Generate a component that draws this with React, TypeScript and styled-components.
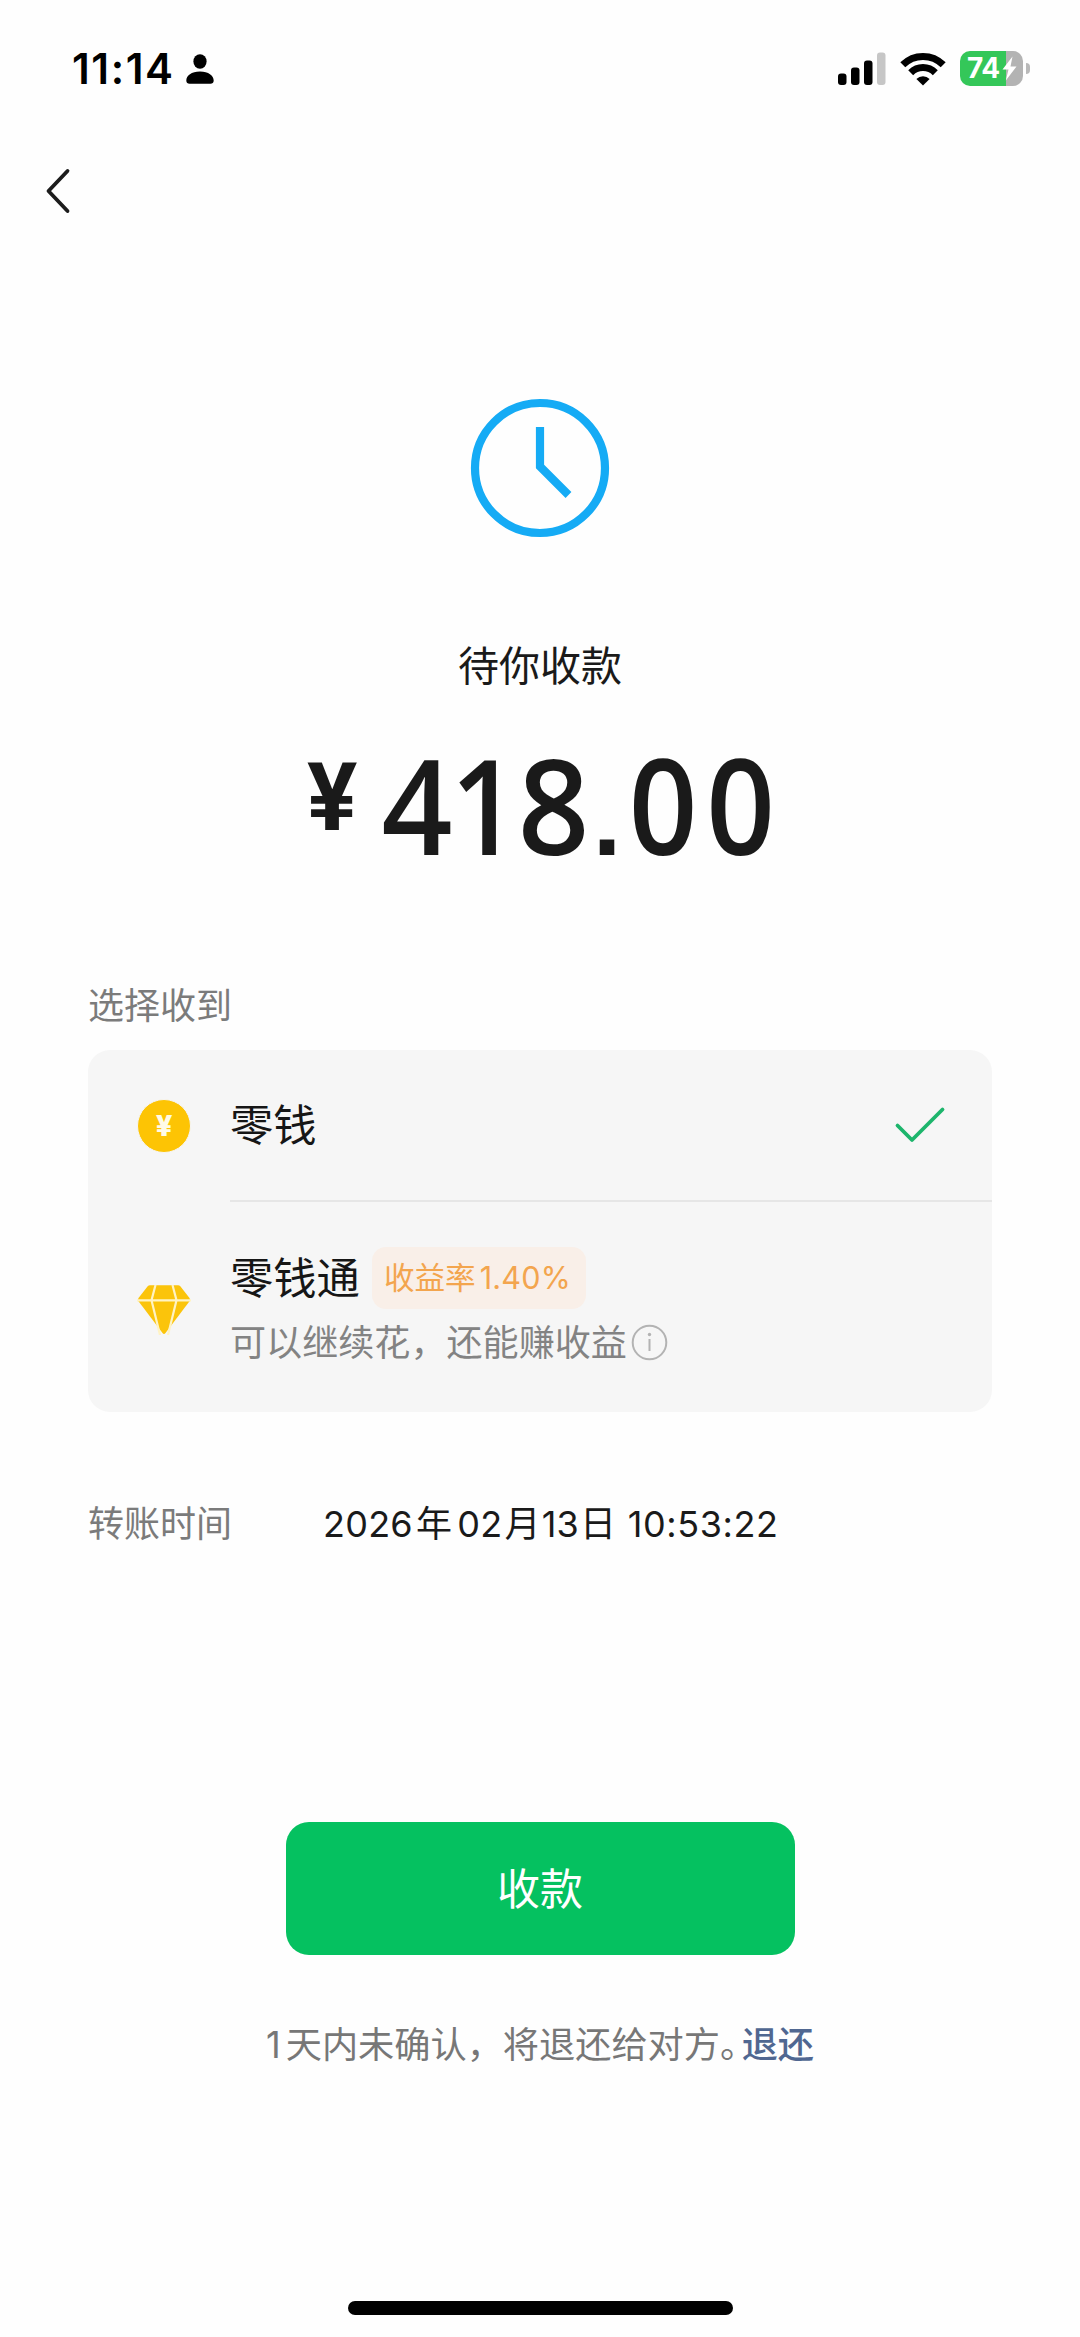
import React from "react";
import styled, { createGlobalStyle } from "styled-components";

const Global = createGlobalStyle`
  * { box-sizing: border-box; }
  html, body { margin: 0; padding: 0; background: #fefefe; }
  body { font-family: Inter, "Noto Sans CJK SC", sans-serif; color: #1a1a1a; }
`;

const Screen = styled.div`
  width: 1080px;
  height: 2337px;
  display: flex;
  flex-direction: column;
  background: #fefefe;
  overflow: hidden;
`;

const StatusBar = styled.header`
  height: 137px;
  flex: none;
  padding: 0 50px 0 72px;
  display: flex;
  justify-content: space-between;
  align-items: center;
`;

const StatusGroup = styled.div<{ $gap: number }>`
  display: flex;
  align-items: center;
  gap: ${(p) => p.$gap}px;
`;

const Clock = styled.span`
  font-size: 42px;
  line-height: 48px;
  font-weight: 600;
  letter-spacing: 1.6px;
  color: #000;
  width: 101px;
  white-space: nowrap;
`;

const Battery = styled.div`
  display: flex;
  align-items: center;
  gap: 3px;
`;

const BatteryBody = styled.div`
  width: 63px;
  height: 35px;
  border-radius: 10px;
  background: linear-gradient(90deg, #34c759 0 46px, #b3b3b3 46px);
  color: #fff;
  font-size: 28px;
  line-height: 35px;
  font-weight: 700;
  letter-spacing: -0.5px;
  padding-left: 7px;
  display: flex;
  align-items: center;
  gap: 2px;
`;

const BatteryCap = styled.div`
  width: 4px;
  height: 11px;
  border-radius: 0 4px 4px 0;
  background: #b9b9b9;
`;

const NavBar = styled.nav`
  height: 108px;
  flex: none;
  padding: 29px 0 0 44px;
`;

const Hero = styled.section`
  height: 717px;
  flex: none;
  padding-top: 153px;
  display: flex;
  flex-direction: column;
  align-items: center;
`;

const Title = styled.h1`
  margin: 98px 0 0;
  font-size: 41px;
  line-height: 60px;
  font-weight: 400;
`;

const Amount = styled.div`
  margin-top: 43px;
  width: 466px;
  height: 140px;
  display: flex;
  align-items: flex-start;
`;

const Currency = styled.span`
  flex: none;
  margin-top: 4px;
  font-family: Roboto, sans-serif;
  font-size: 94px;
  line-height: 110px;
  width: 72px;
  font-weight: 700;
`;

const Figure = styled.div`
  flex: none;
  display: flex;
  align-items: baseline;
  font-family: "Open Sans", sans-serif;
  font-size: 132px;
  line-height: 130px;
  font-weight: 600;
`;

const Digit = styled.span<{ $width: number; $squeeze?: number }>`
  flex: none;
  width: ${(p) => p.$width}px;
  display: flex;
  justify-content: center;
  transform: scaleX(${(p) => p.$squeeze ?? 1});
`;

const Point = styled(Digit)`
  font-family: "Liberation Sans", sans-serif;
  font-size: 103px;
  font-weight: 700;
  line-height: 1;
`;

const Content = styled.main`
  padding: 0 88px;
  flex: none;
`;

const Label = styled.span`
  font-size: 36px;
  line-height: 52px;
  color: #7b7b7b;
`;

const SectionLabel = styled(Label)`
  display: block;
  height: 71px;
  padding-top: 18px;
`;

const Card = styled.div`
  margin-top: 17px;
  height: 362px;
  border-radius: 22px;
  background: #f6f6f6;
  display: flex;
  flex-direction: column;
`;

const Option = styled.div<{ $height: number; $drop?: number }>`
  height: ${(p) => p.$height}px;
  padding-left: 49px;
  padding-top: ${(p) => p.$drop ?? 0}px;
  display: flex;
  align-items: center;
  gap: 39px;
`;

const OptionBody = styled.div<{ $divided?: boolean }>`
  flex: 1;
  height: 100%;
  display: flex;
  align-items: center;
  justify-content: space-between;
  padding-right: 46px;
  border-bottom: ${(p) => (p.$divided ? "2px solid #e6e6e6" : "none")};
`;

const Stack = styled.div`
  padding-top: 3px;
  display: flex;
  flex-direction: column;
`;

const Row = styled.div<{ $gap: number }>`
  display: flex;
  align-items: center;
  gap: ${(p) => p.$gap}px;
`;

const OptionName = styled.span`
  font-size: 43.3px;
  line-height: 62px;
  color: #161616;
`;

const Hint = styled.span`
  font-size: 36.1px;
  line-height: 68px;
  color: #838383;
`;

const Coin = styled.div`
  width: 54px;
  height: 54px;
  flex: none;
  border-radius: 50%;
  border: 0.5px solid #f6f6f6;
  background: #fdc404;
  color: #fffbe8;
  display: flex;
  align-items: center;
  justify-content: center;
  font: 900 30px/52px Roboto, sans-serif;
`;

const Rate = styled.span`
  height: 62px;
  width: 214px;
  padding-left: 12px;
  border-radius: 14px;
  background: #f9efe8;
  color: #f3a54e;
  font-size: 30.6px;
  line-height: 61px;
  white-space: nowrap;
`;

const RateFigure = styled.span`
  margin-left: 4px;
  letter-spacing: 0.2px;
`;

const TimeRow = styled.div`
  margin-top: 86px;
  height: 52px;
  display: flex;
  align-items: center;
`;

const TimeLabel = styled(Label)`
  width: 235px;
`;

const TimeValue = styled.span`
  font-size: 36px;
  line-height: 52px;
  letter-spacing: 0.25px;
  white-space: nowrap;
`;

const Unit = styled.span<{ $before: number; $after: number }>`
  margin: 0 ${(p) => p.$after}px 0 ${(p) => p.$before}px;
`;

const TimeOfDay = styled.span`
  letter-spacing: 0.6px;
`;

const Actions = styled.footer`
  flex: 1;
  padding-top: 272px;
  display: flex;
  flex-direction: column;
  align-items: center;
`;

const Receive = styled.button`
  width: 509px;
  height: 133px;
  border: 0;
  border-radius: 23px;
  background: #05c160;
  color: #fff;
  font: 400 43px/62px Inter, "Noto Sans CJK SC", sans-serif;
`;

const Notice = styled.p`
  margin: 62px 0 0;
  font-size: 36.2px;
  line-height: 56px;
  color: #777;
  white-space: nowrap;
`;

const Days = styled.span`
  margin-right: 5px;
`;

const Stop = styled.span`
  letter-spacing: -14.5px;
`;

const Return = styled.a`
  color: #506791;
  font-weight: 500;
`;

const HomeIndicator = styled.div`
  width: 385px;
  height: 14px;
  margin-top: auto;
  margin-bottom: 22px;
  border-radius: 7px;
  background: #000;
`;

const PersonIcon = () => (
  <svg width="28" height="30" viewBox="0 0 28 30">
    <ellipse cx="14" cy="7.5" rx="6.6" ry="7.3" />
    <path d="M0.3 26.5C0.3 21.5 5.5 17.5 14 17.5s13.7 4 13.7 9c0 2.2-1.4 3.3-3.2 3.3h-21c-1.8 0-3.2-1.1-3.2-3.3z" />
  </svg>
);

const SignalIcon = () => (
  <svg width="48" height="33" viewBox="0 0 48 33">
    <rect x="0" y="21.5" width="8.5" height="11.5" rx="3" />
    <rect x="13" y="15.5" width="8.5" height="17.5" rx="3" />
    <rect x="26" y="8.5" width="8.5" height="24.5" rx="3" />
    <rect x="39" y="0.5" width="8.5" height="32.5" rx="3" fill="#c6c6c6" />
  </svg>
);

const WifiIcon = () => (
  <svg width="46" height="34" viewBox="0 0 46 34">
    <g fill="none" stroke="#000" strokeWidth="7">
      <path d="M2.8 12.8a28.5 28.5 0 0 1 40.4 0" />
      <path d="M10.7 20.7a17.4 17.4 0 0 1 24.6 0" />
    </g>
    <path d="M23 33.5l-6.6-6.6a9.3 9.3 0 0 1 13.2 0z" />
  </svg>
);

const BoltIcon = () => (
  <svg width="15" height="25" viewBox="0 0 15 25">
    <path d="M10.5 0.5L0.5 13.5h6L3.8 24.5 14.5 10.5H8.5z" fill="#fff" />
  </svg>
);

const BackIcon = () => (
  <svg width="28" height="50" viewBox="0 0 28 50" fill="none" stroke="#1c1c1c" strokeWidth="3.8">
    <path d="M23.5 5L4.5 25l19 20" strokeLinecap="round" strokeLinejoin="round" />
  </svg>
);

const PendingIcon = () => (
  <svg width="140" height="140" viewBox="0 0 140 140" fill="none" stroke="#15abf5" strokeWidth="8.2">
    <circle cx="70" cy="70" r="65" />
    <path d="M70 29v39.5l28.5 28.5" />
  </svg>
);

const CheckIcon = () => (
  <svg width="52" height="38" viewBox="0 0 52 38" fill="none" stroke="#1db56c" strokeWidth="3.8">
    <path d="M3.5 19.5L18 34 48.5 3.5" strokeLinecap="round" strokeLinejoin="round" />
  </svg>
);

const DiamondIcon = () => (
  <svg width="54" height="50" viewBox="0 0 54 50">
    <path
      d="M10.5 1.5q1-1.2 2.5-1.2h28q1.5 0 2.5 1.2L52.5 13q1 1.5 0 3.2L28.5 48q-1.5 1.8-3 0L1.5 16.2q-1-1.7 0-3.2z"
      fill="#fbc40b"
    />
    <path
      d="M0 15.3h54M18.5 0l-4 15.3L23 50M35.5 0l4 15.3L31 50"
      fill="none"
      stroke="#fff3c4"
      strokeWidth="2.2"
    />
  </svg>
);

const InfoIcon = () => (
  <svg width="37" height="37" viewBox="0 0 37 37" fill="none" stroke="#b3b3b3" strokeWidth="2">
    <circle cx="18.5" cy="18.5" r="16.8" />
    <path d="M18.5 15v12" />
    <circle cx="18.5" cy="10.5" r="1.7" fill="#b3b3b3" stroke="none" />
  </svg>
);

export default function App() {
  return (
    <>
      <Global />
      <Screen>
        <StatusBar>
          <StatusGroup $gap={13}>
            <Clock>11:14</Clock>
            <PersonIcon />
          </StatusGroup>
          <StatusGroup $gap={14}>
            <SignalIcon />
            <WifiIcon />
            <Battery>
              <BatteryBody>
                74
                <BoltIcon />
              </BatteryBody>
              <BatteryCap />
            </Battery>
          </StatusGroup>
        </StatusBar>
        <NavBar>
          <BackIcon />
        </NavBar>
        <Hero>
          <PendingIcon />
          <Title>待你收款</Title>
          <Amount>
            <Currency>¥</Currency>
            <Figure>
              <Digit $width={76} $squeeze={0.94}>4</Digit>
              <Digit $width={59} $squeeze={0.9}>1</Digit>
              <Digit $width={79} $squeeze={0.95}>8</Digit>
              <Point $width={28}>.</Point>
              <Digit $width={84} $squeeze={0.91}>0</Digit>
              <Digit $width={71} $squeeze={0.91}>0</Digit>
            </Figure>
          </Amount>
        </Hero>
        <Content>
          <SectionLabel>选择收到</SectionLabel>
          <Card>
            <Option $height={152}>
              <Coin>¥</Coin>
              <OptionBody $divided>
                <OptionName>零钱</OptionName>
                <CheckIcon />
              </OptionBody>
            </Option>
            <Option $height={210} $drop={6}>
              <DiamondIcon />
              <OptionBody>
                <Stack>
                  <Row $gap={12}>
                    <OptionName>零钱通</OptionName>
                    <Rate>
                      收益率<RateFigure>1.40%</RateFigure>
                    </Rate>
                  </Row>
                  <Row $gap={4}>
                    <Hint>可以继续花，还能赚收益</Hint>
                    <InfoIcon />
                  </Row>
                </Stack>
              </OptionBody>
            </Option>
          </Card>
          <TimeRow>
            <TimeLabel>转账时间</TimeLabel>
            <TimeValue>
              2026<Unit $before={3} $after={5}>年</Unit>02
              <Unit $before={2} $after={1}>月</Unit>13
              <Unit $before={1} $after={1}>日</Unit> <TimeOfDay>10:53:22</TimeOfDay>
            </TimeValue>
          </TimeRow>
        </Content>
        <Actions>
          <Receive>收款</Receive>
          <Notice>
            <Days>1</Days>天内未确认，将退还给对方<Stop>。</Stop>
            <Return>退还</Return>
          </Notice>
          <HomeIndicator />
        </Actions>
      </Screen>
    </>
  );
}
